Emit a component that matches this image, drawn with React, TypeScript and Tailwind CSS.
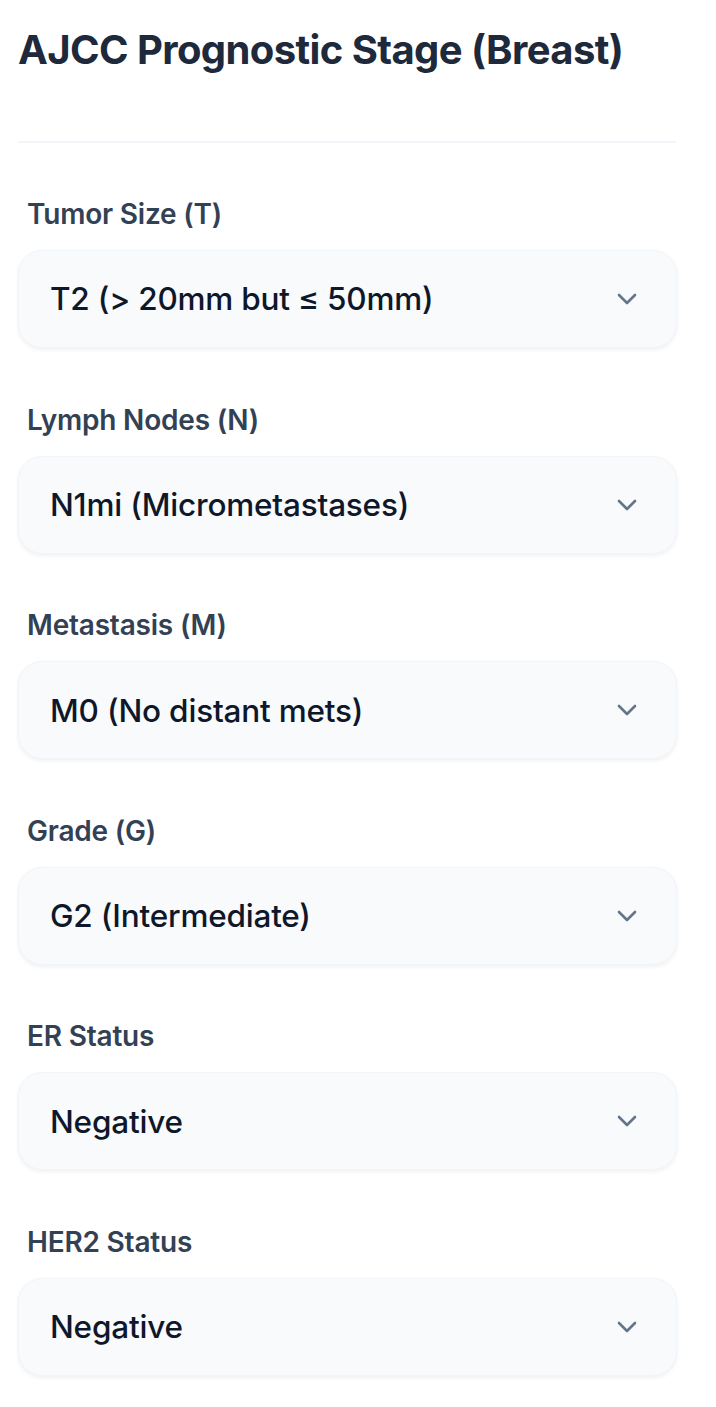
import React from "react";

const fields = [
  { label: "Tumor Size (T)", value: "T2 (> 20mm but ≤ 50mm)" },
  { label: "Lymph Nodes (N)", value: "N1mi (Micrometastases)" },
  { label: "Metastasis (M)", value: "M0 (No distant mets)" },
  { label: "Grade (G)", value: "G2 (Intermediate)" },
  { label: "ER Status", value: "Negative" },
  { label: "HER2 Status", value: "Negative" },
];

function Chevron() {
  return (
    <svg width="20" height="12" viewBox="0 0 20 12" fill="none" stroke="#64748b" strokeWidth="2.6" strokeLinecap="round" strokeLinejoin="round">
      <path d="M2 2l8 8 8-8" />
    </svg>
  );
}

export default function App() {
  return (
    <div className="min-h-[1407px] bg-white px-[18px] pt-[26px]" style={{ fontFamily: "Inter, 'Noto Sans', sans-serif" }}>
      <h1 className="text-[40px] font-bold leading-[48px] tracking-[-0.6px] text-[#1e293b]">AJCC Prognostic Stage (Breast)</h1>
      <div className="mt-[67px] mr-[22px] h-[2px] bg-[#f1f5f9]" />
      <div className="mt-[54px] flex flex-col gap-[54.6px]">
        {fields.map((f) => (
          <div key={f.label} className="flex flex-col">
            <div className="pl-[9px] text-[28px] font-semibold leading-[34px] tracking-[-0.2px] text-[#334155]">{f.label}</div>
            <div className="mt-[19px] mr-[21px] flex h-[98px] items-center justify-between rounded-[24px] border border-[#f1f5f9] bg-[#f8fafc] pl-[31px] pr-[39px] shadow-[0_2px_4px_rgba(15,23,42,0.06)]">
              <span className="text-[31.5px] font-medium tracking-[-0.2px] text-[#0f172a]">{f.value}</span>
              <Chevron />
            </div>
          </div>
        ))}
      </div>
    </div>
  );
}
